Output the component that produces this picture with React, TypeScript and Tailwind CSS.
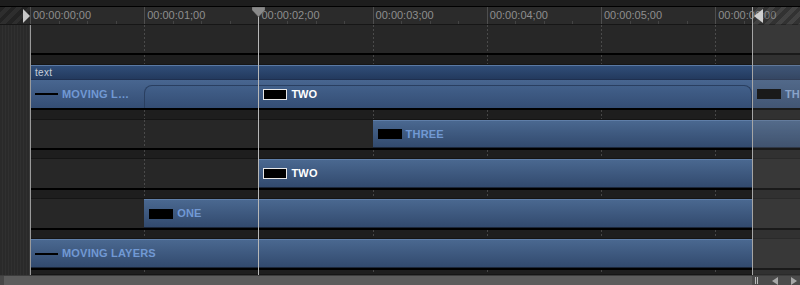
import React from "react";

const PX_PER_SEC = 114.2;
const ORIGIN = 30;
const secX = (s: number) => ORIGIN + s * PX_PER_SEC;

const timecodes = ["00:00:00;00", "00:00:01;00", "00:00:02;00", "00:00:03;00", "00:00:04;00", "00:00:05;00", "00:00:06;00"];

type Clip = { from: number; to: number; label: string; swatch: "line" | "box" | "boxWhite"; white?: boolean };

function Swatch({ kind }: { kind: Clip["swatch"] }) {
  if (kind === "line") return <span className="block h-[2px] w-[23px] bg-black" />;
  if (kind === "boxWhite") return <span className="block h-[11px] w-[24px] border border-[#e8e8e8] bg-black" />;
  return <span className="block h-[10px] w-[24px] bg-black" />;
}

// dotted second lines, drawn under the clips
function Grid() {
  return (
    <>
      {[1, 2, 3, 4, 5, 6].map((s) => (
        <div
          key={s}
          className="pointer-events-none absolute top-0 bottom-0 w-px bg-[repeating-linear-gradient(180deg,rgba(110,110,110,0.5)_0px,rgba(110,110,110,0.5)_2px,transparent_2px,transparent_4px)]"
          style={{ left: secX(s) - ORIGIN }}
        />
      ))}
    </>
  );
}

function ClipBar({ clip }: { clip: Clip }) {
  const left = clip.from - ORIGIN;
  const width = clip.to - clip.from;
  return (
    <div
      className="absolute top-0 bottom-0 flex items-center gap-[4px] border-t border-[#5f7ea8] border-b border-b-[#1b2638] bg-gradient-to-b from-[#4a6890] to-[#324a6e] pl-[5px]"
      style={{ left, width }}
    >
      <Swatch kind={clip.swatch} />
      <span className={`whitespace-nowrap text-[11px] font-bold tracking-[0.2px] ${clip.white ? "text-white" : "text-[#7199d4]"}`}>{clip.label}</span>
    </div>
  );
}

function Gap({ h }: { h: string }) {
  return (
    <div className={`relative ${h} border-t-2 border-black bg-[#1e1e1e] border-b border-b-[#151515]`}>
      <Grid />
    </div>
  );
}

function Row({ h, clips }: { h: string; clips: Clip[] }) {
  return (
    <div className={`relative ${h} bg-[#272727]`}>
      <Grid />
      {clips.map((c) => (
        <ClipBar key={c.label + c.from} clip={c} />
      ))}
    </div>
  );
}

export default function App() {
  const stripes = "bg-[repeating-linear-gradient(135deg,#232323_0px,#232323_4px,#2e2e2e_4px,#2e2e2e_8px)]";
  const minorTicks = Array.from({ length: 28 }, (_, i) => ORIGIN + (i * PX_PER_SEC) / 4).filter((x, i) => i % 4 !== 0 && x < 752);

  return (
    <div className="relative flex h-[285px] w-[800px] flex-col overflow-hidden bg-[#262626] font-['Liberation_Sans',Arial,sans-serif]">
      {/* top band */}
      <div className="h-[7px] border-b border-black bg-[#1d1d1d]" />

      {/* ruler */}
      <div className="flex h-[18px] border-b border-[#161616]">
        <div className={`relative w-[30px] ${stripes}`}>
          <svg className="absolute right-0 top-[2px]" width="7" height="14" viewBox="0 0 7 14">
            <path d="M0 0 L7 7 L0 14 Z" fill="#c9c9c9" />
          </svg>
        </div>
        <div className="relative flex-1 bg-[#2b2b2b]">
          {timecodes.map((t, i) => (
            <div key={t} className="absolute top-0 h-full border-l border-[#4e4e4e]" style={{ left: secX(i) - ORIGIN }}>
              <span className="absolute left-[2px] top-[3px] text-[11px] leading-none text-[#8e8e8e]">{t}</span>
            </div>
          ))}
          {minorTicks.map((x) => (
            <div key={x} className="absolute bottom-0 h-[3px] w-px bg-[#444]" style={{ left: x - ORIGIN }} />
          ))}
        </div>
      </div>

      {/* tracks */}
      <div className="flex flex-1">
        <div className="w-[30px] border-r border-[#3a3a3a] bg-[#2c2c2c] bg-[repeating-linear-gradient(90deg,#2a2a2a_0px,#2a2a2a_2px,#303030_2px,#303030_3px)]" />
        <div className="relative flex-1">
          <Row h="h-[28px]" clips={[]} />
          <Gap h="h-[12px]" />
          {/* group header */}
          <div className="flex h-[14px] items-center border-t border-[#5a79a3] bg-gradient-to-b from-[#304d78] to-[#233a5e] pl-[5px]">
            <span className="text-[10px] leading-none tracking-[0.3px] text-[#c7cfdb]">text</span>
          </div>
          {/* group summary */}
          <div className="relative h-[29px] overflow-hidden border-t border-[#1f3050] bg-gradient-to-b from-[#486690] to-[#344d74]">
            <div className="absolute left-[5px] top-0 bottom-0 flex items-center gap-[4px]">
              <Swatch kind="line" />
              <span className="text-[11px] font-bold tracking-[0.2px] text-[#7199d4]">MOVING L…</span>
            </div>
            <div
              className="absolute bottom-0 top-[5px] rounded-t-[8px] border border-b-0 border-[#2a3f60] bg-gradient-to-b from-[#42608a] to-[#344d74]"
              style={{ left: secX(1) - ORIGIN, width: 752 - secX(1) }}
            />
            <div className="absolute top-0 bottom-0 flex items-center gap-[4px] pl-[5px]" style={{ left: secX(2) - ORIGIN }}>
              <Swatch kind="boxWhite" />
              <span className="text-[11px] font-bold text-white">TWO</span>
            </div>
            <div className="absolute top-0 bottom-0 flex items-center gap-[4px] border-l border-[#7f9bc0] pl-[4px]" style={{ left: 752 - ORIGIN }}>
              <Swatch kind="box" />
              <span className="text-[11px] font-bold text-[#8fb0e0]">TH</span>
            </div>
          </div>
          <Gap h="h-[12px]" />
          <Row h="h-[28px]" clips={[{ from: secX(3), to: 830, label: "THREE", swatch: "box" }]} />
          <Gap h="h-[11px]" />
          <Row h="h-[29px]" clips={[{ from: secX(2), to: 752, label: "TWO", swatch: "boxWhite", white: true }]} />
          <Gap h="h-[11px]" />
          <Row h="h-[29px]" clips={[{ from: secX(1), to: 752, label: "ONE", swatch: "box" }]} />
          <Gap h="h-[11px]" />
          <Row h="h-[29px]" clips={[{ from: secX(0), to: 752, label: "MOVING LAYERS", swatch: "line" }]} />
          <Gap h="h-[7px]" />

          {/* start line */}
          <div className="absolute left-0 top-0 bottom-0 w-px bg-[#9a9a9a]" />
        </div>
      </div>

      {/* scroll bar */}
      <div className="flex h-[10px] border-t border-[#3c3c3c] bg-[#5c5c5c]">
        <div className="w-[4px] bg-[#474747]" />
        <div className="flex-1" />
        <div className="flex w-[48px] items-center justify-between bg-[#4b4b4b] px-[3px]">
          <span className="flex gap-[1px]">
            <span className="h-[7px] w-px bg-[#bbb]" />
            <span className="h-[7px] w-px bg-[#bbb]" />
          </span>
          <svg width="6" height="8" viewBox="0 0 6 8"><path d="M6 0 L0 4 L6 8 Z" fill="#a8a8a8" /></svg>
          <svg width="6" height="8" viewBox="0 0 6 8"><path d="M0 0 L6 4 L0 8 Z" fill="#a8a8a8" /></svg>
        </div>
      </div>

      {/* out-of-range overlay */}
      <div className="pointer-events-none absolute left-[752px] top-[7px] h-[268px] w-[48px] border-l border-[#a6a6a6] bg-[rgba(120,120,120,0.22)]">
        <div className="h-[18px] bg-[repeating-linear-gradient(135deg,rgba(0,0,0,0.15)_0px,rgba(0,0,0,0.15)_4px,rgba(255,255,255,0.04)_4px,rgba(255,255,255,0.04)_8px)]" />
        <svg className="absolute left-0 top-[2px]" width="10" height="14" viewBox="0 0 10 14">
          <path d="M10 0 L1 7 L10 14 Z" fill="#d0d0d0" />
        </svg>
      </div>

      {/* playhead */}
      <div className="pointer-events-none absolute top-[7px] h-[268px] w-px bg-[#b8b8b8]" style={{ left: 258 }} />
      <svg className="pointer-events-none absolute top-[7px]" style={{ left: 252 }} width="13" height="10" viewBox="0 0 13 10">
        <path d="M0 0 H13 V3 L6.5 10 L0 3 Z" fill="#8a8a8a" stroke="#5a5a5a" strokeWidth="0.5" />
      </svg>
    </div>
  );
}
